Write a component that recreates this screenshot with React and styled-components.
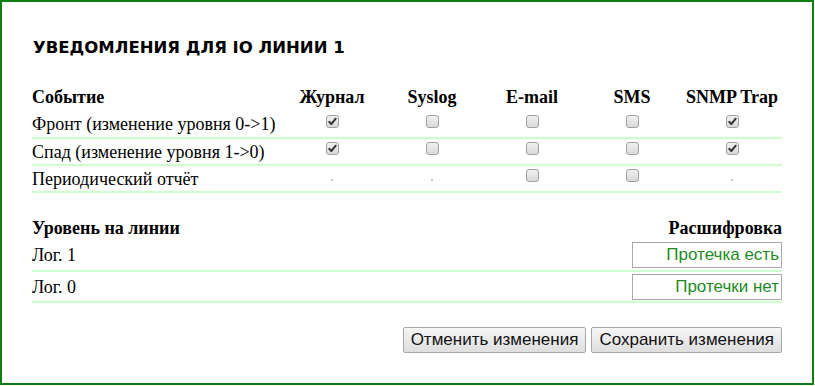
import React from 'react';
import styled, { createGlobalStyle } from 'styled-components';

const GlobalStyle = createGlobalStyle`
  html, body {
    margin: 0;
    padding: 0;
    background: #fff;
  }
`;

const events = [
  { name: 'Фронт (изменение уровня 0->1)', values: [true, false, false, false, true] },
  { name: 'Спад (изменение уровня 1->0)', values: [true, false, false, false, true] },
  { name: 'Периодический отчёт', values: [null, null, false, false, null] },
];

const channels = ['Журнал', 'Syslog', 'E-mail', 'SMS', 'SNMP Trap'];

const levels = [
  { name: 'Лог. 1', text: 'Протечка есть' },
  { name: 'Лог. 0', text: 'Протечки нет' },
];

// disabled checkbox, old chrome look; null = no option for this channel
const Check = ({ checked }) => {
  if (checked === null) return <Dot />;
  return (
    <Box>
      {checked && (
        <svg width="9" height="9" viewBox="0 0 9 9">
          <path d="M1.3 4.9 L3.3 7.1 L7.7 1.7" fill="none" stroke="#333" strokeWidth="2" strokeLinecap="round" strokeLinejoin="round" />
        </svg>
      )}
    </Box>
  );
};

class App extends React.Component {
  render() {
    return (
      <Frame>
        <GlobalStyle />
        <Title>УВЕДОМЛЕНИЯ ДЛЯ IO ЛИНИИ 1</Title>
        <Table>
          <colgroup>
            <col style={{ width: 250 }} />
            {channels.map(c => <col key={c} style={{ width: 100 }} />)}
          </colgroup>
          <thead>
            <tr>
              <Th>Событие</Th>
              {channels.map(c => <Th key={c} center>{c}</Th>)}
            </tr>
          </thead>
          <tbody>
            {events.map(ev => (
              <Row key={ev.name}>
                <Td>{ev.name}</Td>
                {ev.values.map((v, i) => (
                  <Td key={i} center><Check checked={v} /></Td>
                ))}
              </Row>
            ))}
          </tbody>
        </Table>

        <LevelTable>
          <thead>
            <tr>
              <LevelTh>Уровень на линии</LevelTh>
              <LevelTh right>Расшифровка</LevelTh>
            </tr>
          </thead>
          <tbody>
            {levels.map(l => (
              <LevelRow key={l.name}>
                <Td>{l.name}</Td>
                <Td right><TextInput defaultValue={l.text} /></Td>
              </LevelRow>
            ))}
          </tbody>
        </LevelTable>

        <Buttons>
          <Button>Отменить изменения</Button>
          <Button>Сохранить изменения</Button>
        </Buttons>
      </Frame>
    );
  }
}

const Frame = styled.div`
  box-sizing: border-box;
  width: 814px;
  height: 385px;
  border: 2px solid #0f7f0f;
  padding: 36px 30px 0 30px;
  font-family: "Liberation Serif", "Times New Roman", serif;
  font-size: 18px;
  color: #000;
`;

const Title = styled.h1`
  margin: 0 0 29px 1px;
  font-family: "DejaVu Sans", Verdana, sans-serif;
  font-weight: bold;
  font-size: 16.5px;
  line-height: 20px;
`;

const Table = styled.table`
  width: 750px;
  border-collapse: collapse;
  table-layout: fixed;
`;

const Th = styled.th`
  box-sizing: border-box;
  padding: 0 0 4px;
  height: 24px;
  line-height: 20px;
  font-weight: bold;
  white-space: nowrap;
  text-align: ${p => (p.center ? 'center' : p.right ? 'right' : 'left')};
  vertical-align: bottom;
`;

const LevelTh = styled(Th)`
  height: 22px;
  padding-bottom: 2px;
`;

const Td = styled.td`
  padding: 0;
  line-height: 20px;
  white-space: nowrap;
  text-align: ${p => (p.center ? 'center' : p.right ? 'right' : 'left')};
  vertical-align: middle;
`;

const Row = styled.tr`
  height: 27px;
  border-bottom: 2px solid #ccffcc;
`;

const LevelTable = styled.table`
  width: 750px;
  border-collapse: collapse;
  margin-top: 25px;
`;

const LevelRow = styled.tr`
  height: 31px;
  border-bottom: 2px solid #ccffcc;
`;

const Box = styled.span`
  box-sizing: border-box;
  display: flex;
  align-items: center;
  justify-content: center;
  width: 13px;
  height: 13px;
  margin: -6px auto 0;
  border: 1px solid #a0a0a0;
  border-radius: 3px;
  background: linear-gradient(#f0f0f0, #d9d9d9);
`;

const Dot = styled.span`
  display: inline-block;
  width: 2px;
  height: 2px;
  background: #c4c4c4;
  vertical-align: middle;
`;

const TextInput = styled.input`
  box-sizing: border-box;
  display: block;
  width: 150px;
  height: 26px;
  margin: 0 0 0 auto;
  padding: 0 2px 0 0;
  border: 1px solid #a9a9a9;
  text-align: right;
  font-family: "Liberation Sans", Arial, sans-serif;
  font-size: 17px;
  color: #1f8a1f;
  background: #fff;
`;

const Buttons = styled.div`
  width: 750px;
  display: flex;
  justify-content: flex-end;
  gap: 5px;
  margin-top: 24px;
`;

const Button = styled.button`
  box-sizing: border-box;
  height: 26px;
  padding: 0 7px;
  border: 1px solid #a6a6a6;
  border-radius: 2px;
  background: linear-gradient(#f6f6f6, #dedede);
  font-family: "Liberation Sans", Arial, sans-serif;
  font-size: 17px;
  color: #111;
`;

export default App;
